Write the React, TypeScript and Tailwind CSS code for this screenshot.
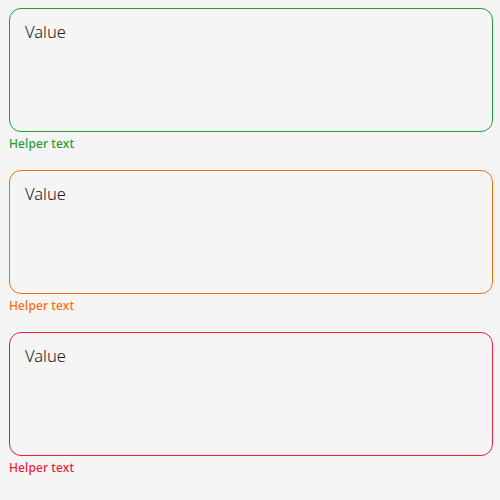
const fields = [
  { border: "border-[#1f9e35]", text: "text-[#1f9e35]" },
  { border: "border-[#ff6a0f]", text: "text-[#ff6a0f]" },
  { border: "border-[#ee1b3b]", text: "text-[#ee1b3b]" },
];

export default function App() {
  return (
    <div className="min-h-[500px] bg-[#f5f5f5] pl-[9px] pr-[7px] pt-[8px] font-['Noto_Sans',sans-serif]">
      {fields.map((f, i) => (
        <div key={i} className="mb-[18px]">
          <div
            className={`h-[124px] rounded-[12px] border ${f.border} px-[15px] pt-[11px] text-[16.5px] font-light leading-[24px] text-[#1a1a1a]`}
          >
            Value
          </div>
          <div className={`mt-[4px] text-[12px] font-medium leading-[16px] tracking-[0.1px] ${f.text}`}>
            Helper text
          </div>
        </div>
      ))}
    </div>
  );
}
